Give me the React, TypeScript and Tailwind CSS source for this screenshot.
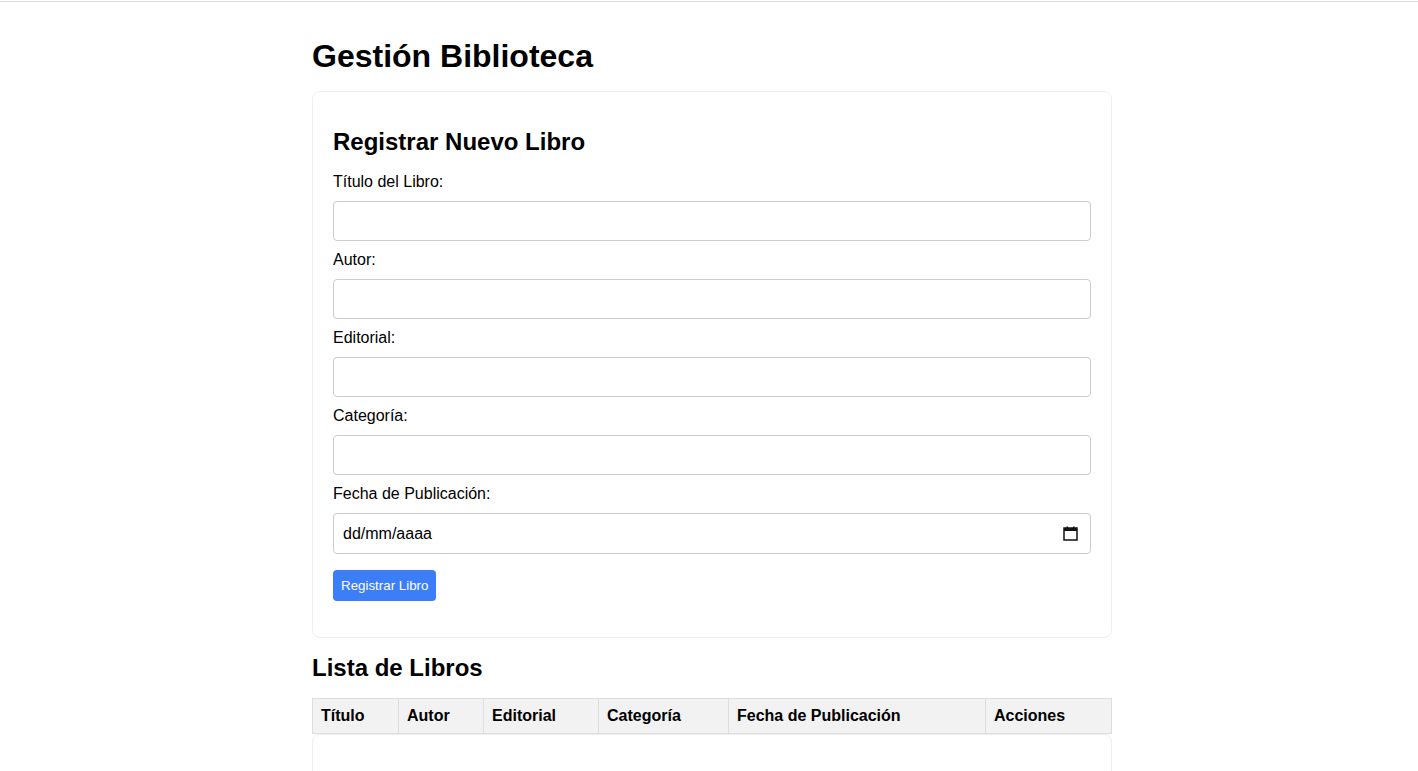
import React from 'react';

const fields = [
  { id: 'titulo', label: 'Título del Libro:' },
  { id: 'autor', label: 'Autor:' },
  { id: 'editorial', label: 'Editorial:' },
  { id: 'categoria', label: 'Categoría:' },
];

const columns = [
  { name: 'Título', w: 'w-[86px]' },
  { name: 'Autor', w: 'w-[85px]' },
  { name: 'Editorial', w: 'w-[115px]' },
  { name: 'Categoría', w: 'w-[130px]' },
  { name: 'Fecha de Publicación', w: 'w-[257px]' },
  { name: 'Acciones', w: 'w-[126px]' },
];

function CalendarIcon() {
  return (
    <svg width="15" height="15" viewBox="0 0 15 15" className="block">
      <rect x="1" y="2" width="13" height="12" fill="none" stroke="#111" strokeWidth="1.5" />
      <rect x="1" y="2" width="13" height="3" fill="#111" />
      <rect x="3.5" y="0.5" width="1.5" height="2.5" fill="#111" />
      <rect x="10" y="0.5" width="1.5" height="2.5" fill="#111" />
    </svg>
  );
}

export default function App() {
  return (
    <div className="min-h-screen bg-white text-black font-['Liberation_Sans',Arial,sans-serif]">
      <div className="mt-px h-px bg-[#dedede]" />

      <div className="mx-auto w-[806px] pl-[6px]">
        <h1 className="mt-[36px] mb-[17px] text-[32px] font-bold leading-[36px]">Gestión Biblioteca</h1>

        {/* formulario */}
        <div className="rounded-lg border border-[#eeeeee] px-[20px] pt-[20px] pb-[36px]">
          <h2 className="mt-[16px] mb-[18px] text-[24px] font-bold leading-[27px]">Registrar Nuevo Libro</h2>

          {fields.map((f) => (
            <div key={f.id}>
              <label htmlFor={f.id} className="mb-[10px] block text-[16px] leading-[18px]">
                {f.label}
              </label>
              <input
                id={f.id}
                type="text"
                className="mb-[10px] block h-[40px] w-full rounded-[4px] border border-[#cccccc] px-[10px] text-[16px] outline-none"
              />
            </div>
          ))}

          <label className="mb-[10px] block text-[16px] leading-[18px]">Fecha de Publicación:</label>
          <div className="mb-[16px] flex h-[41px] w-full items-center justify-between rounded-[4px] border border-[#cccccc] pl-[9px] pr-[12px]">
            <span className="text-[16px] leading-[18px]">dd/mm/aaaa</span>
            <CalendarIcon />
          </div>

          <button className="h-[31px] rounded-[4px] bg-[#3b7ef7] px-[8px] text-[13.33px] text-white">
            Registrar Libro
          </button>
        </div>

        {/* listado */}
        <h2 className="mt-[16px] mb-[17px] text-[24px] font-bold leading-[27px]">Lista de Libros</h2>

        <div className="w-[799px]">
          <table className="w-full table-fixed border-collapse">
            <thead>
              <tr className="bg-[#f2f2f2]">
                {columns.map((c) => (
                  <th
                    key={c.name}
                    className={`${c.w} border border-[#dddddd] px-[8px] py-[8px] text-left text-[16px] font-bold leading-[18px]`}
                  >
                    {c.name}
                  </th>
                ))}
              </tr>
            </thead>
          </table>
        </div>
        <div className="h-[60px] rounded-lg border border-[#eeeeee]" />
      </div>
    </div>
  );
}
